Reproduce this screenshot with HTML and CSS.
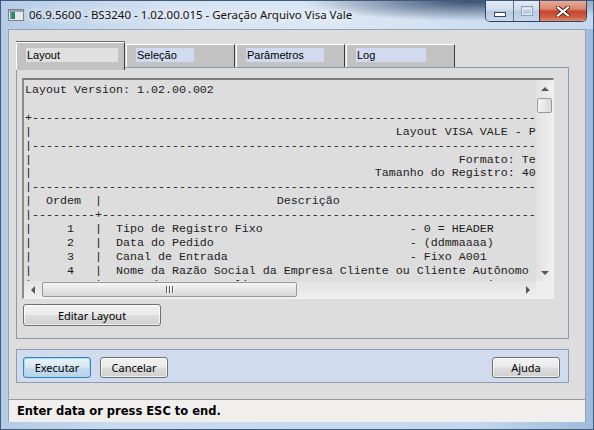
FILE: index.html
```html
<!DOCTYPE html>
<html>
<head>
  <meta charset="UTF-8" />
  <title>Geração Arquivo Visa Vale</title>
  <link rel="stylesheet" href="styles.css">
</head>
<body>
  <div class="window">
    <div class="titlebar">
      <svg class="app-icon" width="16" height="12" viewBox="0 0 16 12">
        <rect x="0.5" y="0.5" width="15" height="11" fill="#e4e6e8" stroke="#7c8288"/>
        <rect x="1" y="1" width="14" height="2" fill="#9aa3ad"/>
        <rect x="2" y="3" width="5" height="7" fill="#2f7f72"/>
        <rect x="2" y="3" width="2" height="7" fill="#52a08f"/>
      </svg>
      <span class="title">06.9.5600 - BS3240 - 1.02.00.015 - Geração Arquivo Visa Vale</span>
      <div class="caption">
        <div class="cap-btn cap-min">
          <svg width="12" height="5" viewBox="0 0 12 5"><rect x="0.5" y="0.5" width="11" height="4" fill="#fff" stroke="#35455c"/></svg>
        </div>
        <div class="cap-btn cap-max">
          <svg width="12" height="10" viewBox="0 0 12 10"><rect x="0.5" y="0.5" width="11" height="9" fill="none" stroke="#8d9db3"/><rect x="1.5" y="2.5" width="9" height="6" fill="none" stroke="#e8eef6"/></svg>
        </div>
        <div class="cap-btn cap-close">
          <svg width="14" height="11" viewBox="0 0 14 11">
            <path d="M2 1.5 L12 9.5 M12 1.5 L2 9.5" stroke="#4a1c14" stroke-width="4" stroke-linecap="square"/>
            <path d="M2 1.5 L12 9.5 M12 1.5 L2 9.5" stroke="#fff" stroke-width="2.2" stroke-linecap="square"/>
          </svg>
        </div>
      </div>
    </div>

    <div class="client">
      <div class="content">
        <div class="tabs">
          <div class="tab active tab-layout"><span class="tab-label">Layout</span></div>
          <div class="tab tab-selecao"><span class="tab-label">Seleção</span></div>
          <div class="tab tab-params"><span class="tab-label">Parâmetros</span></div>
          <div class="tab tab-log"><span class="tab-label">Log</span></div>
        </div>

        <div class="panel">
          <div class="editor">
<pre class="editor-text">Layout Version: 1.02.00.002

+-----------------------------------------------------------------------------------------------------------+
|                                                    Layout VISA VALE - Pedido de Cartões                   |
|-----------------------------------------------------------------------------------------------------------|
|                                                             Formato: Texto                                |
|                                                 Tamanho do Registro: 400                                  |
|-----------------------------------------------------------------------------------------------------------|
|  Ordem  |                         Descrição                                                               |
|---------+-------------------------------------------------------------------------------------------------|
|     1   |  Tipo de Registro Fixo                     - 0 = HEADER                                         |
|     2   |  Data do Pedido                            - (ddmmaaaa)                                         |
|     3   |  Canal de Entrada                          - Fixo A001                                          |
|     4   |  Nome da Razão Social da Empresa Cliente ou Cliente Autônomo                                    |
|     5   |  CNPJ da Empresa Cliente                   - Somente números                                    |</pre>
            <div class="vscroll">
              <div class="arrow"><span class="tri tri-up"></span></div>
              <div class="thumb-v"></div>
              <div class="track"></div>
              <div class="arrow"><span class="tri tri-down"></span></div>
            </div>
            <div class="hscroll">
              <div class="arrow"><span class="tri tri-left"></span></div>
              <div class="thumb-h">
                <span class="grip"></span><span class="grip"></span><span class="grip"></span>
              </div>
              <div class="track"></div>
              <div class="arrow"><span class="tri tri-right"></span></div>
            </div>
            <div class="corner"></div>
          </div>
          <button class="btn btn-edit">Editar Layout</button>
        </div>

        <div class="actions">
          <button class="btn btn-default">Executar</button>
          <button class="btn">Cancelar</button>
          <button class="btn btn-help">Ajuda</button>
        </div>
      </div>
      <div class="status">Enter data or press ESC to end.</div>
    </div>
  </div>
</body>
</html>
```

FILE: styles.css
```css
* {
  box-sizing: border-box;
}
body {
  margin: 0;
  background: #bcd2ea;
}
.window {
  width: 594px;
  height: 430px;
  display: flex;
  flex-direction: column;
  border: 1px solid #41597a;
  background: linear-gradient(to right, #b4cbe6, #c8dbef 20%, #c3d7ee 80%, #9fbbdc);
}

/* title bar */
.titlebar {
  height: 28px;
  display: flex;
  align-items: flex-start;
  background:
    radial-gradient(ellipse 170px 20px at 470px 0, rgba(28, 52, 88, 0.85), rgba(28, 52, 88, 0)),
    linear-gradient(to right, #b6cce6, #d5e3f2 30%, #dbe7f4 55%, #c6d8ed 100%);
}
.app-icon {
  margin: 8px 0 0 7px;
}
.title {
  margin: 6px 0 0 5px;
  font-family: "Noto Sans", sans-serif;
  font-size: 11.5px;
  line-height: 16px;
  color: #111;
  text-shadow: 0 0 6px #fff, 0 0 10px #fff;
}
.caption {
  display: flex;
  margin-left: auto;
  margin-right: 6px;
  height: 21px;
  border: 1px solid #2f4462;
  border-top: 0;
  border-radius: 0 0 5px 5px;
  overflow: hidden;
}
.cap-btn {
  display: flex;
  justify-content: center;
  align-items: center;
}
.cap-min,
.cap-max {
  background: linear-gradient(#e2ebf6, #cfdcec 45%, #b6cae1 50%, #c9d9ec);
}
.cap-min {
  width: 28px;
  border-right: 1px solid #5f7593;
  padding-top: 7px;
}
.cap-max {
  width: 26px;
  border-right: 1px solid #4b3434;
}
.cap-close {
  width: 46px;
  background: linear-gradient(#eaa898, #d9876f 40%, #c5462d 52%, #cf5e43 80%, #e28b6d);
}

/* client area */
.client {
  flex: 1;
  display: flex;
  flex-direction: column;
  margin: 0 7px 7px 7px;
  border: 1px solid #8fa3bd;
  border-bottom: 0;
  background: #dddddd;
}
.content {
  flex: 1;
  display: flex;
  flex-direction: column;
  padding: 12px 16px 0 7px;
}

/* tabs */
.tabs {
  display: flex;
  align-items: flex-end;
  gap: 1px;
  margin-bottom: -3px;
}
.tab {
  width: 109px;
  height: 24px;
  margin-bottom: 2px;
  background: #c2c2c2;
  border-top: 1px solid #fff;
  border-left: 1px solid #fff;
  border-right: 1px solid #3c3c3c;
  border-bottom: 1px solid #3c3c3c;
}
.tab.active {
  position: relative;
  z-index: 1;
  height: 28px;
  margin-bottom: 0;
  border-bottom: 0;
  box-shadow: 0 -1px 0 #6a6a6a;
}
.tab-label {
  display: block;
  margin: 3px 0 0 9px;
  height: 14px;
  padding-left: 1px;
  font-family: "Liberation Sans", sans-serif;
  font-size: 11px;
  line-height: 14px;
  color: #000;
  background: #d1daee;
}
.tab.active .tab-label {
  margin-top: 5px;
  background: #e0e0e0;
}
.tab-layout .tab-label { width: 92px; }
.tab-selecao .tab-label { width: 58px; }
.tab-params .tab-label { width: 78px; }
.tab-log .tab-label { width: 70px; }

.panel {
  display: flex;
  flex-direction: column;
  align-items: flex-start;
  height: 272px;
  padding: 10px 14px 12px 5px;
  border: 1px solid #8c99a7;
}

/* text viewer */
.editor {
  width: 100%;
  height: 221px;
  display: grid;
  grid-template-columns: 1fr 17px;
  grid-template-rows: 1fr 17px;
  border-style: solid;
  border-width: 2px 1px 1px 2px;
  border-color: #7b7b7b #f2f2f2 #f2f2f2 #8a8a8a;
  background: #dddddd;
}
.editor-text {
  margin: 0;
  padding: 4px 0 0 1px;
  overflow: hidden;
  font-family: "Liberation Mono", monospace;
  font-size: 11.67px;
  line-height: 13.9px;
  color: #1c1c1c;
}
.vscroll,
.hscroll {
  display: flex;
  background: #ebebeb;
}
.vscroll {
  flex-direction: column;
  background: linear-gradient(to right, #e2e2e2, #efefef);
}
.hscroll {
  background: linear-gradient(#e2e2e2, #efefef);
}
.arrow {
  flex: 0 0 17px;
  display: flex;
  justify-content: center;
  align-items: center;
}
.track {
  flex: 1;
}
.tri {
  width: 0;
  height: 0;
  border: 4px solid transparent;
}
.tri-up { border-bottom-color: #555; border-top-width: 0; }
.tri-down { border-top-color: #555; border-bottom-width: 0; }
.tri-left { border-right-color: #555; border-left-width: 0; }
.tri-right { border-left-color: #555; border-right-width: 0; }
.thumb-v {
  height: 15px;
  margin: 1px 1px 0 1px;
  border: 1px solid #999;
  border-radius: 2px;
  background: linear-gradient(to right, #f4f4f4, #e6e6e6 50%, #d8d8d8);
}
.thumb-h {
  width: 255px;
  margin: 1px 0 1px 1px;
  display: flex;
  justify-content: center;
  align-items: center;
  gap: 1px;
  border: 1px solid #999;
  border-radius: 2px;
  background: linear-gradient(#f4f4f4, #e6e6e6 50%, #d8d8d8);
}
.grip {
  width: 1px;
  height: 7px;
  background: #5c5c5c;
  box-shadow: 1px 0 0 #fafafa;
  margin-right: 1px;
}
.corner {
  background: #eeeeee;
}

/* buttons */
.btn {
  height: 22px;
  padding: 0;
  font-family: "Noto Sans", sans-serif;
  font-size: 11px;
  color: #000;
  border: 1px solid #707070;
  border-radius: 3px;
  background: linear-gradient(#f2f2f2, #ebebeb 48%, #dddddd 52%, #cfcfcf);
  box-shadow: inset 0 0 0 1px rgba(255, 255, 255, 0.7);
}
.btn-edit {
  width: 138px;
  margin: 5px 0 0 1px;
}
.actions {
  display: flex;
  gap: 9px;
  height: 34px;
  margin-top: 10px;
  padding: 7px 8px 0 6px;
  border: 1px solid #8e9bb0;
  background: #d1dbee;
}
.actions .btn {
  width: 68px;
  height: 21px;
}
.btn-default {
  border-color: #3c7fb1;
  background: linear-gradient(#e8f3fa, #d7e8f4 48%, #c4dbec 52%, #b9d3e7);
  box-shadow: inset 0 0 0 1px #9bdcf8;
}
.btn-help {
  margin-left: auto;
}

/* status bar */
.status {
  height: 23px;
  padding-left: 8px;
  border-top: 1px solid #9a9a9a;
  background: #f0efed;
  font-family: "DejaVu Sans", sans-serif;
  font-weight: bold;
  font-size: 11.5px;
  line-height: 22px;
  color: #000;
}
```
